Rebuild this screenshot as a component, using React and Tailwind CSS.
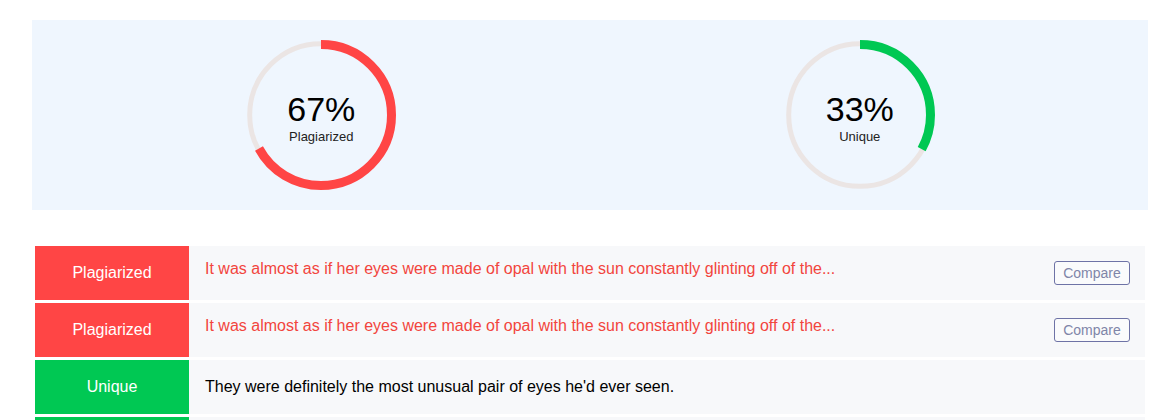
import React from 'react';

const rows = [
  { type: 'plag', label: 'Plagiarized', text: 'It was almost as if her eyes were made of opal with the sun constantly glinting off of the...' },
  { type: 'plag', label: 'Plagiarized', text: 'It was almost as if her eyes were made of opal with the sun constantly glinting off of the...' },
  { type: 'unique', label: 'Unique', text: "They were definitely the most unusual pair of eyes he'd ever seen." },
  { type: 'unique', label: '', text: '' }, // only the top edge shows in the window
];

const Ring = ({ pct, color, label }) => {
  const r = 70.5;
  const c = 2 * Math.PI * r;
  return (
    <div className="relative w-[150px] h-[150px]">
      <svg width="150" height="150" viewBox="0 0 150 150">
        <circle cx="75" cy="75" r="71.3" fill="none" stroke="#ebe5e4" strokeWidth="5" />
        <circle
          cx="75" cy="75" r={r} fill="none" stroke={color} strokeWidth="9"
          strokeDasharray={`${(c * pct) / 100} ${c}`}
          transform="rotate(-90 75 75)"
        />
      </svg>
      {/* number + caption in the middle */}
      <div className="absolute inset-0 flex flex-col items-center justify-center pt-[7px] text-black">
        <span className="text-[34px] leading-[34px]">{pct}%</span>
        <span className="text-[13px] leading-[16px] mt-[3px] text-[#222]">{label}</span>
      </div>
    </div>
  );
};

export default function App() {
  return (
    <div className="w-[1169px] h-[420px] overflow-hidden bg-white pl-8 pr-[21px] pt-5" style={{ fontFamily: '"Liberation Sans", Arial, sans-serif' }}>
      {/* summary panel */}
      <div className="h-[190px] bg-[#eff6fe] grid grid-cols-2 pl-[20px] pr-[19px] items-center">
        <div className="flex justify-center">
          <Ring pct={67} color="#ff4545" label="Plagiarized" />
        </div>
        <div className="flex justify-center">
          <Ring pct={33} color="#00c853" label="Unique" />
        </div>
      </div>

      {/* sentence rows */}
      <div className="mt-9 mx-[3px] flex flex-col gap-[3px]">
        {rows.map((row, i) => (
          <div key={i} className="flex h-[54px] shrink-0">
            <div className={`w-[154px] shrink-0 flex items-center justify-center text-white text-[16px] ${row.type === 'plag' ? 'bg-[#ff4545]' : 'bg-[#00c853]'}`}>
              {row.label}
            </div>
            <div className="flex-1 bg-[#f7f8fa] flex items-center justify-between pl-4 pr-[15px]">
              {row.type === 'plag' ? (
                <>
                  <span className="text-[16px] text-[#f2453d] mb-2">{row.text}</span>
                  <button className="w-[76px] h-[24px] border border-[#6e73a6] rounded-[3px] text-[14px] text-[#7f86a8] bg-white/40">
                    Compare
                  </button>
                </>
              ) : (
                <span className="text-[16px] text-black">{row.text}</span>
              )}
            </div>
          </div>
        ))}
      </div>
    </div>
  );
}
